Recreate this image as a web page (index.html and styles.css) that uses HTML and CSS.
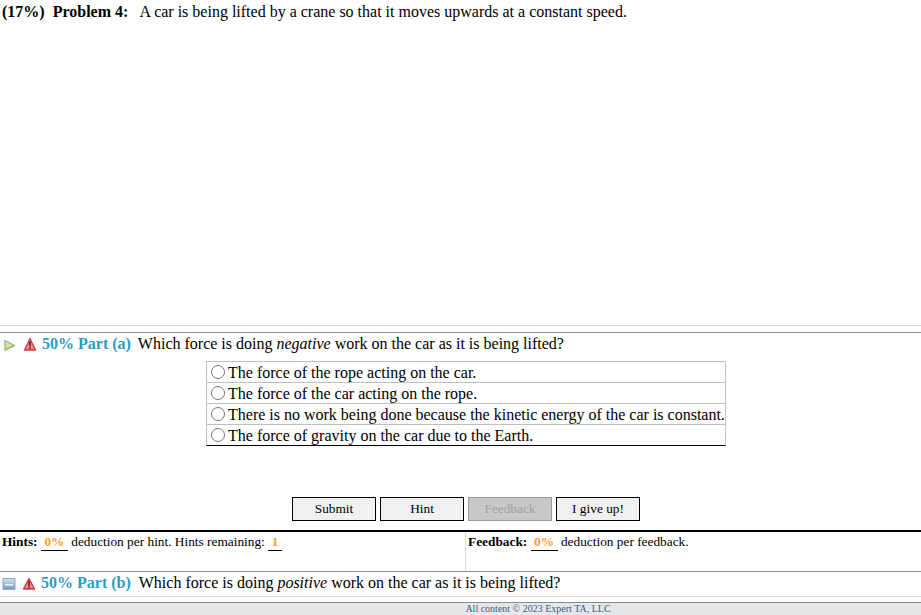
FILE: index.html
```html
<!DOCTYPE html>
<html lang="en">
<head>
  <meta charset="UTF-8">
  <meta name="viewport" content="width=device-width, initial-scale=1.0">
  <title>Problem 4</title>
  <link rel="stylesheet" href="styles.css">
</head>

<body>
  <div class="problem">
    <span class="problem-label">(17%)&nbsp; Problem 4:</span>
    <span class="problem-text">A car is being lifted by a crane so that it moves upwards at a constant speed.</span>
  </div>

  <div class="part part-a">
    <svg class="icon-play" width="12" height="14" viewBox="0 0 12 14">
      <path d="M1 3.5 L10.5 8.5 L1 13 Z" fill="#d3e4a8" stroke="#9cb876" stroke-width="1.4" stroke-linejoin="round"/>
    </svg>
    <svg class="icon-warn" width="14" height="14" viewBox="0 0 14 14">
      <path d="M7 1.5 L12.5 13 L1.5 13 Z" fill="#f08a8e" stroke="#d0363e" stroke-width="1.3" stroke-linejoin="round"/>
      <rect x="6.2" y="4.5" width="1.6" height="5" fill="#7a1318"/>
      <rect x="6.2" y="10.3" width="1.6" height="1.6" fill="#7a1318"/>
    </svg>
    <span class="part-label">50% Part (a)</span>
    <span class="part-text">Which force is doing <em>negative</em> work on the car as it is being lifted?</span>
  </div>

  <div class="choices">
    <label class="choice"><span class="radio"></span>The force of the rope acting on the car.</label>
    <label class="choice"><span class="radio"></span>The force of the car acting on the rope.</label>
    <label class="choice"><span class="radio"></span>There is no work being done because the kinetic energy of the car is constant.</label>
    <label class="choice"><span class="radio"></span>The force of gravity on the car due to the Earth.</label>
  </div>

  <div class="buttons">
    <button>Submit</button>
    <button>Hint</button>
    <button class="disabled">Feedback</button>
    <button>I give up!</button>
  </div>

  <div class="info">
    <div class="info-cell hints">
      <b>Hints:</b> <span class="value">0%</span> deduction per hint. Hints remaining: <span class="value small">1</span>
    </div>
    <div class="info-cell feedback">
      <b>Feedback:</b> <span class="value">0%</span> deduction per feedback.
    </div>
  </div>

  <div class="part part-b">
    <svg class="icon-box" width="14" height="14" viewBox="0 0 14 14">
      <defs>
        <linearGradient id="boxFill" x1="0" y1="0" x2="0" y2="1">
          <stop offset="0" stop-color="#d5e2f2"/>
          <stop offset="1" stop-color="#6f97cc"/>
        </linearGradient>
      </defs>
      <rect x="1" y="2.5" width="12" height="11" fill="url(#boxFill)" stroke="#8fa8c6"/>
      <rect x="3" y="8" width="8" height="1.5" fill="#f2f6fb"/>
    </svg>
    <svg class="icon-warn" width="14" height="14" viewBox="0 0 14 14">
      <path d="M7 2.5 L12.5 13 L1.5 13 Z" fill="#f08a8e" stroke="#d0363e" stroke-width="1.3" stroke-linejoin="round"/>
      <rect x="6.2" y="5" width="1.6" height="4.8" fill="#7a1318"/>
      <rect x="6.2" y="10.4" width="1.6" height="1.6" fill="#7a1318"/>
    </svg>
    <span class="part-label">50% Part (b)</span>
    <span class="part-text">Which force is doing <em>positive</em> work on the car as it is being lifted?</span>
  </div>

  <div class="footer">All content &copy; 2023 Expert TA, LLC</div>
</body>
</html>
```

FILE: styles.css
```css
html, body {
  margin: 0;
  padding: 0;
}

body {
  width: 921px;
  height: 615px;
  overflow: hidden;
  background-color: #fff;
  color: #000;
  font-family: "Liberation Serif", "Times New Roman", serif;
  font-size: 16px;
}

.problem {
  height: 326px;
  box-sizing: border-box;
  padding: 3px 0 0 2px;
  border-bottom: 1px solid #d9d9d9;
  line-height: 17px;
}

.problem-label {
  font-weight: bold;
  margin-right: 8px;
}

.part {
  display: flex;
  align-items: center;
  box-sizing: border-box;
  border-top: 1px solid #8c8c8c;
  font-size: 16px;
}

.part-a {
  margin-top: 6px;
  height: 23px;
  padding-left: 4px;
}

.part-b {
  height: 26px;
  padding-left: 2px;
  padding-bottom: 2px;
  border-bottom: 1px solid #d9d9d9;
}

.part svg {
  flex: none;
}

.icon-warn {
  margin-left: 7px;
}

.part-b .icon-warn {
  margin-left: 6px;
}

.part-label {
  margin: 0 7px 0 5px;
  color: #2b9cc4;
  font-weight: bold;
}

.part-b .part-label {
  margin: 0 8px 0 5px;
}

.choices {
  width: 520px;
  box-sizing: border-box;
  margin: 6px 0 0 206px;
  border: 1px solid #bfbfbf;
  border-bottom: 1px solid #000;
}

.choice {
  display: flex;
  align-items: center;
  box-sizing: border-box;
  height: 21px;
  padding: 2px 0 0 4px;
  border-bottom: 1px solid #bfbfbf;
  font-size: 16px;
  white-space: nowrap;
}

.choice:last-child {
  height: 20px;
  border-bottom: none;
}

.radio {
  flex: none;
  width: 12px;
  height: 12px;
  margin: -2px 3px 0 0;
  border: 1px solid #767676;
  border-radius: 50%;
  background-color: #fff;
}

.buttons {
  display: flex;
  justify-content: center;
  gap: 4px;
  margin-top: 51px;
  padding-left: 11px;
}

.buttons button {
  width: 84px;
  height: 24px;
  padding: 0;
  border: 1px solid #000;
  background-color: #f0f0f0;
  color: #000;
  font-family: inherit;
  font-size: 13.33px;
}

.buttons .disabled {
  background-color: #c8c8c8;
  border-color: #999;
  color: #a0a0a0;
}

.info {
  display: flex;
  height: 41px;
  box-sizing: border-box;
  margin-top: 9px;
  border-top: 2px solid #000;
  font-size: 13.33px;
}

.info-cell {
  box-sizing: border-box;
  padding-top: 2px;
  line-height: 16px;
}

.hints {
  width: 466px;
  padding-left: 2px;
  border-right: 1px solid #d9d9d9;
}

.feedback {
  padding-left: 2px;
}

.value {
  display: inline-block;
  width: 27px;
  border-bottom: 1px solid #000;
  color: #ff9c2a;
  font-weight: bold;
  text-align: center;
}

.value.small {
  width: 14px;
}

.footer {
  margin-top: 5px;
  height: 13px;
  box-sizing: border-box;
  border-top: 1px solid #8c8c8c;
  background-color: #e6e7e8;
  color: #3c5a8c;
  font-size: 10px;
  line-height: 12px;
  text-align: center;
  padding-left: 155px;
}
```
